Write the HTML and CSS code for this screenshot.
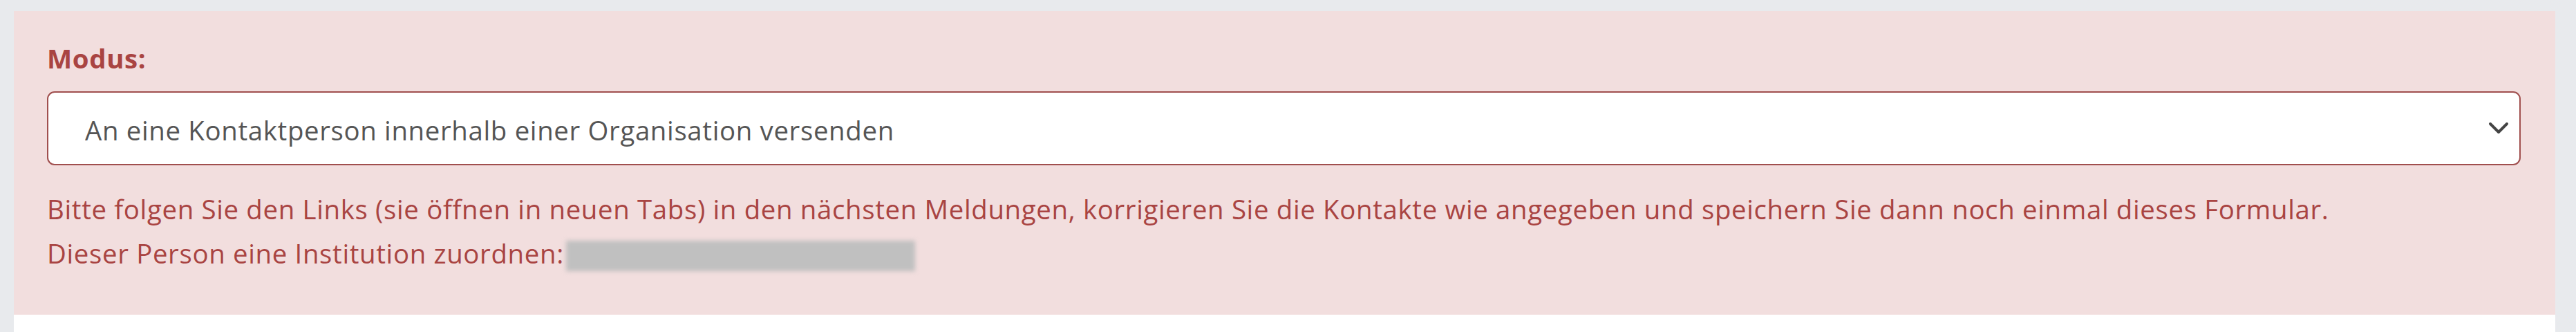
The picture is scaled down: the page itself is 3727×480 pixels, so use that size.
FILE: index.html
```html
<!DOCTYPE html>
<html lang="de">
<head>
    <meta charset="UTF-8">
    <meta name="viewport" content="width=device-width, initial-scale=1.0">
    <title>Versand</title>
    <link rel="stylesheet" href="styles.css">
</head>
<body>
    <div class="card">
        <div class="form-group has-error">
            <label class="control-label" for="modus">Modus:</label>
            <div class="select-wrap">
                <select id="modus" class="form-control">
                    <option>An eine Kontaktperson innerhalb einer Organisation versenden</option>
                </select>
                <svg class="caret" width="30" height="20" viewBox="0 0 30 20">
                    <polyline points="3,3 15,15 27,3" fill="none" stroke="#444" stroke-width="4" stroke-linecap="round" stroke-linejoin="round"/>
                </svg>
            </div>
            <div class="help-block">
                <p>Bitte folgen Sie den Links (sie öffnen in neuen Tabs) in den nächsten Meldungen, korrigieren Sie die Kontakte wie angegeben und speichern Sie dann noch einmal dieses Formular.</p>
                <p>Dieser Person eine Institution zuordnen: <span class="redacted"></span></p>
            </div>
        </div>
    </div>
</body>
</html>
```
FILE: styles.css
```css
body {
    margin: 0;
    padding: 16px 30px 0 20px;
    background-color: #e8eaed;
    font-family: "Open Sans", "Noto Sans", sans-serif;
    font-size: 38.4px;
    letter-spacing: 0.65px;
}
.card {
    background-color: #fff;
    height: 464px;
}
.form-group {
    padding: 40px 50px 57px 48px;
}
.has-error {
    background-color: #f2dede;
    color: #a94442;
}
.control-label {
    display: block;
    font-weight: bold;
    line-height: 57.6px;
    margin-bottom: 18px;
}
.select-wrap {
    position: relative;
}
.form-control {
    display: block;
    width: 100%;
    height: 107px;
    box-sizing: border-box;
    padding: 6px 80px 0 53px;
    border: 2px solid #a04f4e;
    border-radius: 11px;
    background-color: #fff;
    color: #555;
    font-family: inherit;
    font-size: 38.4px;
    letter-spacing: 0.65px;
    -webkit-appearance: none;
    appearance: none;
    outline: none;
}
.caret {
    position: absolute;
    right: 17px;
    top: 44px;
    pointer-events: none;
}
.help-block {
    margin-top: 31px;
    line-height: 64px;
}
.help-block p {
    margin: 0;
    white-space: nowrap;
}
.redacted {
    display: inline-block;
    width: 505px;
    height: 44px;
    margin-left: -8px;
    vertical-align: -11px;
    background-color: #c0c0c0;
    filter: blur(3px);
}
```
